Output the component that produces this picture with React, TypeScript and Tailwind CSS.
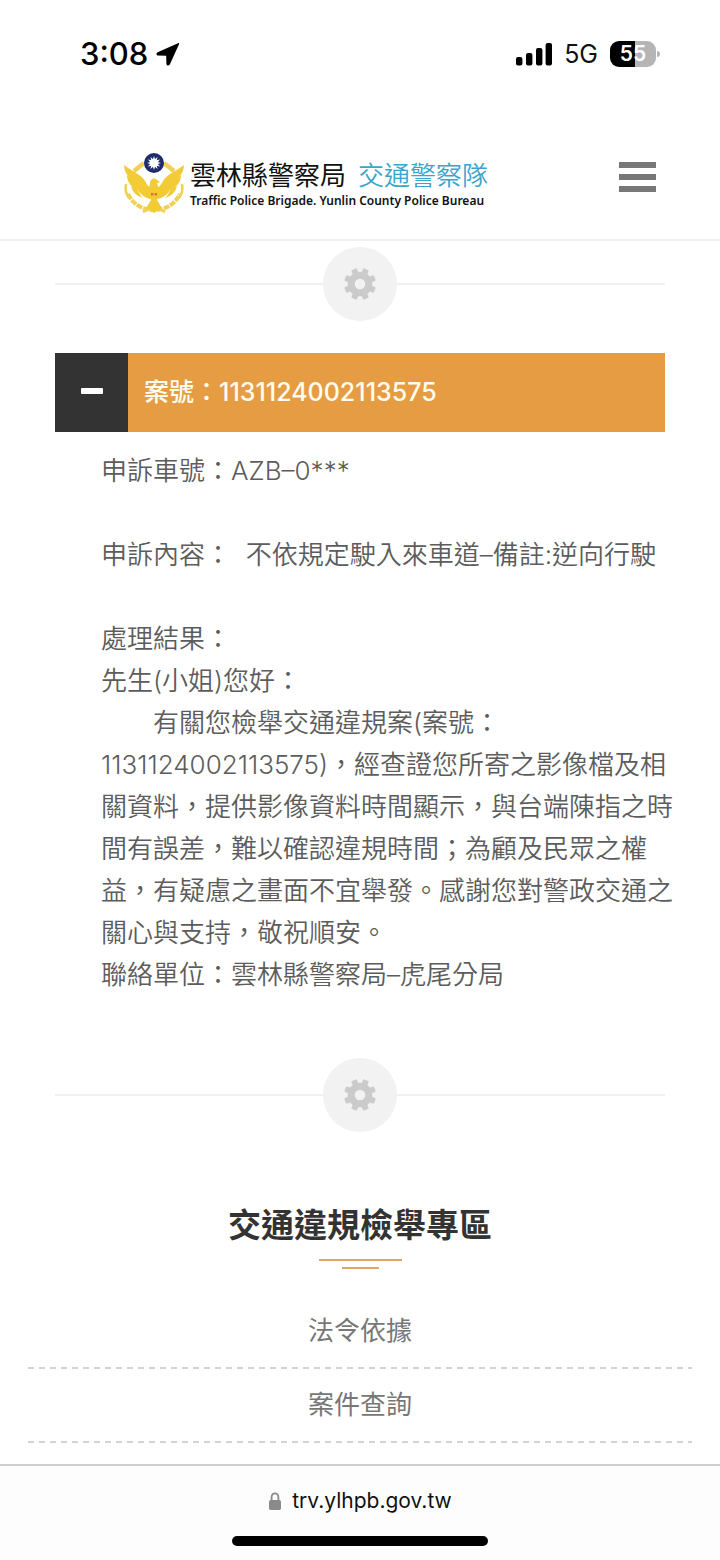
import React, { useState } from "react";

const sans = "font-['Inter','Noto_Sans_CJK_TC',sans-serif]";

function Gear() {
  return (
    <svg viewBox="-18 -18 36 36" className="size-9 text-[#cbcbcb]" aria-hidden="true">
      <circle r="8.8" fill="none" stroke="currentColor" strokeWidth="7" />
      {[22.5, 67.5, 112.5, 157.5, 202.5, 247.5, 292.5, 337.5].map((a) => (
        <path
          key={a}
          d="M-3 -11 L-3 -14.8 Q-3 -16 -2 -16 L2 -16 Q3 -16 3 -14.8 L3 -11Z"
          fill="currentColor"
          transform={`rotate(${a})`}
        />
      ))}
    </svg>
  );
}

function GearDivider() {
  return (
    <div className="flex items-center" role="separator">
      <span className="h-[2px] flex-1 bg-[#f1f1f1]" />
      <span className="flex size-[74px] items-center justify-center rounded-full bg-[#f2f2f2]">
        <Gear />
      </span>
      <span className="h-[2px] flex-1 bg-[#f1f1f1]" />
    </div>
  );
}

function Emblem() {
  const rays = Array.from({ length: 12 }, (_, i) => i * 30);
  return (
    <svg viewBox="0 0 62 64" className="h-16 w-[62px] shrink-0" aria-hidden="true">
      <g fill="none" stroke="#efd255">
        <path d="M5 42 C10 52 19 58 31 58 C43 58 52 52 57 42" strokeWidth="4" strokeDasharray="6 1" />
        <path d="M3 32 C2 37 3 42 6 46 M59 32 C60 37 59 42 56 46" strokeWidth="2.6" />
        <path d="M11 19 L21 11 M51 19 L41 11" strokeWidth="4.4" />
        <path d="M20 60 L27 56 M42 60 L35 56" strokeWidth="2.6" />
      </g>
      <g fill="#f2cb35">
        <path d="M1 13 C7 18 18 22 22 29 C24 33 26 35 28 36 L28 47 C21 46 16 41 14 36 C16 41 17 43 20 46 C13 44 9 39 8 34 L11 36 C6 32 4 28 4 23 L7 26 C3 22 1 18 1 13Z" />
        <path d="M61 13 C55 18 44 22 40 29 C38 33 36 35 34 36 L34 47 C41 46 46 41 48 36 C46 41 45 43 42 46 C49 44 53 39 54 34 L51 36 C56 32 58 28 58 23 L55 26 C59 22 61 18 61 13Z" />
        <path d="M27 31 C27 27 31 25 34 28 L37 30 L34 31 C36 36 37 42 34 48 L39 56 L34 59 L31 61 L28 59 L23 56 L28 48 C25 42 26 37 27 31Z" />
      </g>
      <path d="M28 41h2.4v2.4h-2.4zM31.6 41h2.4v2.4h-2.4z" fill="#d8742a" />
      <circle cx="31" cy="11" r="10" fill="#1f2c6b" />
      <g fill="#fff">
        {rays.map((a) => (
          <path key={a} d="M29.7 8 L31 4 L32.3 8Z" transform={`rotate(${a} 31 11)`} />
        ))}
        <circle cx="31" cy="11" r="3.6" />
      </g>
    </svg>
  );
}

function StatusBar() {
  return (
    <div className="flex h-[108px] items-center justify-between pr-[60px] pl-20">
      <div className="flex items-center gap-2 text-[31px] leading-8 font-medium text-black">
        <span>3:08</span>
        <svg viewBox="0 0 24 24" className="size-6" aria-hidden="true">
          <path
            d="M22 1.2 L1.6 10.2 C-.2 11.2 .2 13.4 2.2 13.6 L10.2 13.8 L10.4 21.8 C10.6 23.8 12.8 24.2 13.8 22.4 L23 2.2 C23.4 1.2 22.8 .8 22 1.2Z"
            fill="currentColor"
          />
        </svg>
      </div>
      <div className="flex items-center gap-3">
        <svg viewBox="0 0 36 24" className="h-6 w-9" aria-label="訊號">
          <rect x="0" y="15" width="6.4" height="8.4" rx="2" />
          <rect x="10" y="11" width="6.4" height="12.4" rx="2" />
          <rect x="20" y="6" width="6.4" height="17.4" rx="2" />
          <rect x="29.6" y="1" width="6.4" height="22.4" rx="2" />
        </svg>
        <span className="text-[25px] leading-8 text-[#111]">5G</span>
        <div className="flex items-center gap-px">
          <div className="flex h-[26px] w-[46px] items-center justify-center rounded-[9px] bg-[linear-gradient(90deg,#000_55%,#b5b5b5_55%)] text-[21px] leading-6 font-semibold text-white">
            55
          </div>
          <span className="h-[6px] w-[3px] rounded-r bg-[#b5b5b5]" />
        </div>
      </div>
    </div>
  );
}

function SiteHeader() {
  return (
    <header className="flex h-[133px] items-start justify-between border-b-2 border-[#f0f0f0] pt-11 pr-16 pl-[123px]">
      <a href="#" className="flex gap-[5px]">
        <Emblem />
        <span className="flex flex-col pt-1">
          <span className="flex gap-3 font-['Noto_Sans_CJK_TC',sans-serif] text-[26px] leading-9">
            <span className="text-[#111]">雲林縣警察局</span>
            <span className="font-[350] text-[#3aa5cc]">交通警察隊</span>
          </span>
          <span className="font-['Noto_Sans','Open_Sans',sans-serif] text-xs leading-[18px] font-semibold whitespace-nowrap text-[#111]">
            Traffic Police Brigade. Yunlin County Police Bureau
          </span>
        </span>
      </a>
      <button type="button" aria-label="選單" className="mt-[10px] flex w-[37px] flex-col gap-[6px]">
        <span className="h-[6px] bg-[#777]" />
        <span className="h-[6px] bg-[#777]" />
        <span className="h-[6px] bg-[#777]" />
      </button>
    </header>
  );
}

function CaseItem() {
  const [open, setOpen] = useState(true);
  return (
    <article>
      <h2>
        <button
          type="button"
          aria-expanded={open}
          onClick={() => setOpen(!open)}
          className="flex h-[79px] w-full items-stretch bg-[#e69c43] text-left"
        >
          <span className="flex w-[73px] items-center justify-center bg-[#333] pb-1">
            <span className="h-[6px] w-[22px] rounded-[1px] bg-white" />
          </span>
          <span className="flex items-center pl-4 text-[25px] font-medium text-[#fffdf0]">案號：1131124002113575</span>
        </button>
      </h2>
      {open && (
        <div className="-mr-[10px] pt-[18px] pl-[46px] text-[26px] leading-[42px] font-[350] text-[#5c5c5c]">
          <p>申訴車號：AZB–0***</p>
          <p className="mt-[42px]">申訴內容：{"\u00a0\u00a0"}不依規定駛入來車道–備註:逆向行駛</p>
          <p className="mt-[42px]">處理結果：</p>
          <p>先生(小姐)您好：</p>
          <p>
            {"\u3000\u3000"}有關您檢舉交通違規案(案號：1131124002113575)，經查證您所寄之影像檔及相關資料，提供影像資料時間顯示，與台端陳指之時間有誤差，難以確認違規時間；為顧及民眾之權益，有疑慮之畫面不宜舉發。感謝您對警政交通之關心與支持，敬祝順安。
          </p>
          <p>聯絡單位：雲林縣警察局–虎尾分局</p>
        </div>
      )}
    </article>
  );
}

function ReportMenu() {
  return (
    <nav className="mt-[68px] px-7" aria-labelledby="report-menu">
      <h2 id="report-menu" className="text-center text-[33px] leading-[50px] font-bold text-[#333]">
        交通違規檢舉專區
      </h2>
      <div className="mt-[9px] flex flex-col items-center gap-[6px]">
        <span className="h-[2px] w-[83px] bg-[#e0a860]" />
        <span className="h-[2px] w-[37px] bg-[#e0a860]" />
      </div>
      <ul className="mt-[26px] text-center text-[26px] text-[#777]">
        {["法令依據", "案件查詢"].map((label) => (
          <li key={label}>
            <a href="#" className="block py-4 leading-10">
              {label}
            </a>
            <div className="h-[2px] bg-[repeating-linear-gradient(90deg,#d3d3d3_0_6px,transparent_6px_11px)]" />
          </li>
        ))}
      </ul>
    </nav>
  );
}

function AddressBar() {
  return (
    <footer className="mt-auto flex h-[96px] flex-col items-center border-t-2 border-[#cfcfcf] bg-[#fdfdfd] pt-5">
      <div className="flex items-center gap-[10px] text-[21px] leading-[30px] text-[#111]">
        <svg viewBox="0 0 14 18" className="h-[18px] w-[14px] text-[#8a8a8a]" aria-hidden="true">
          <rect x="1" y="8" width="12" height="10" rx="1.8" fill="currentColor" />
          <path d="M3.6 9V5.2a3.4 3.9 0 0 1 6.8 0V9" fill="none" stroke="currentColor" strokeWidth="1.8" />
        </svg>
        <span>trv.ylhpb.gov.tw</span>
      </div>
      <span className="mt-5 h-[10px] w-64 rounded-full bg-black" />
    </footer>
  );
}

export default function App() {
  return (
    <div lang="zh-Hant" className={`flex min-h-screen flex-col bg-white ${sans}`}>
      <StatusBar />
      <SiteHeader />
      <main>
        <div className="px-[55px] pt-[6px]">
          <GearDivider />
          <div className="mt-8 mb-[62px]">
            <CaseItem />
          </div>
          <GearDivider />
        </div>
        <ReportMenu />
      </main>
      <AddressBar />
    </div>
  );
}
